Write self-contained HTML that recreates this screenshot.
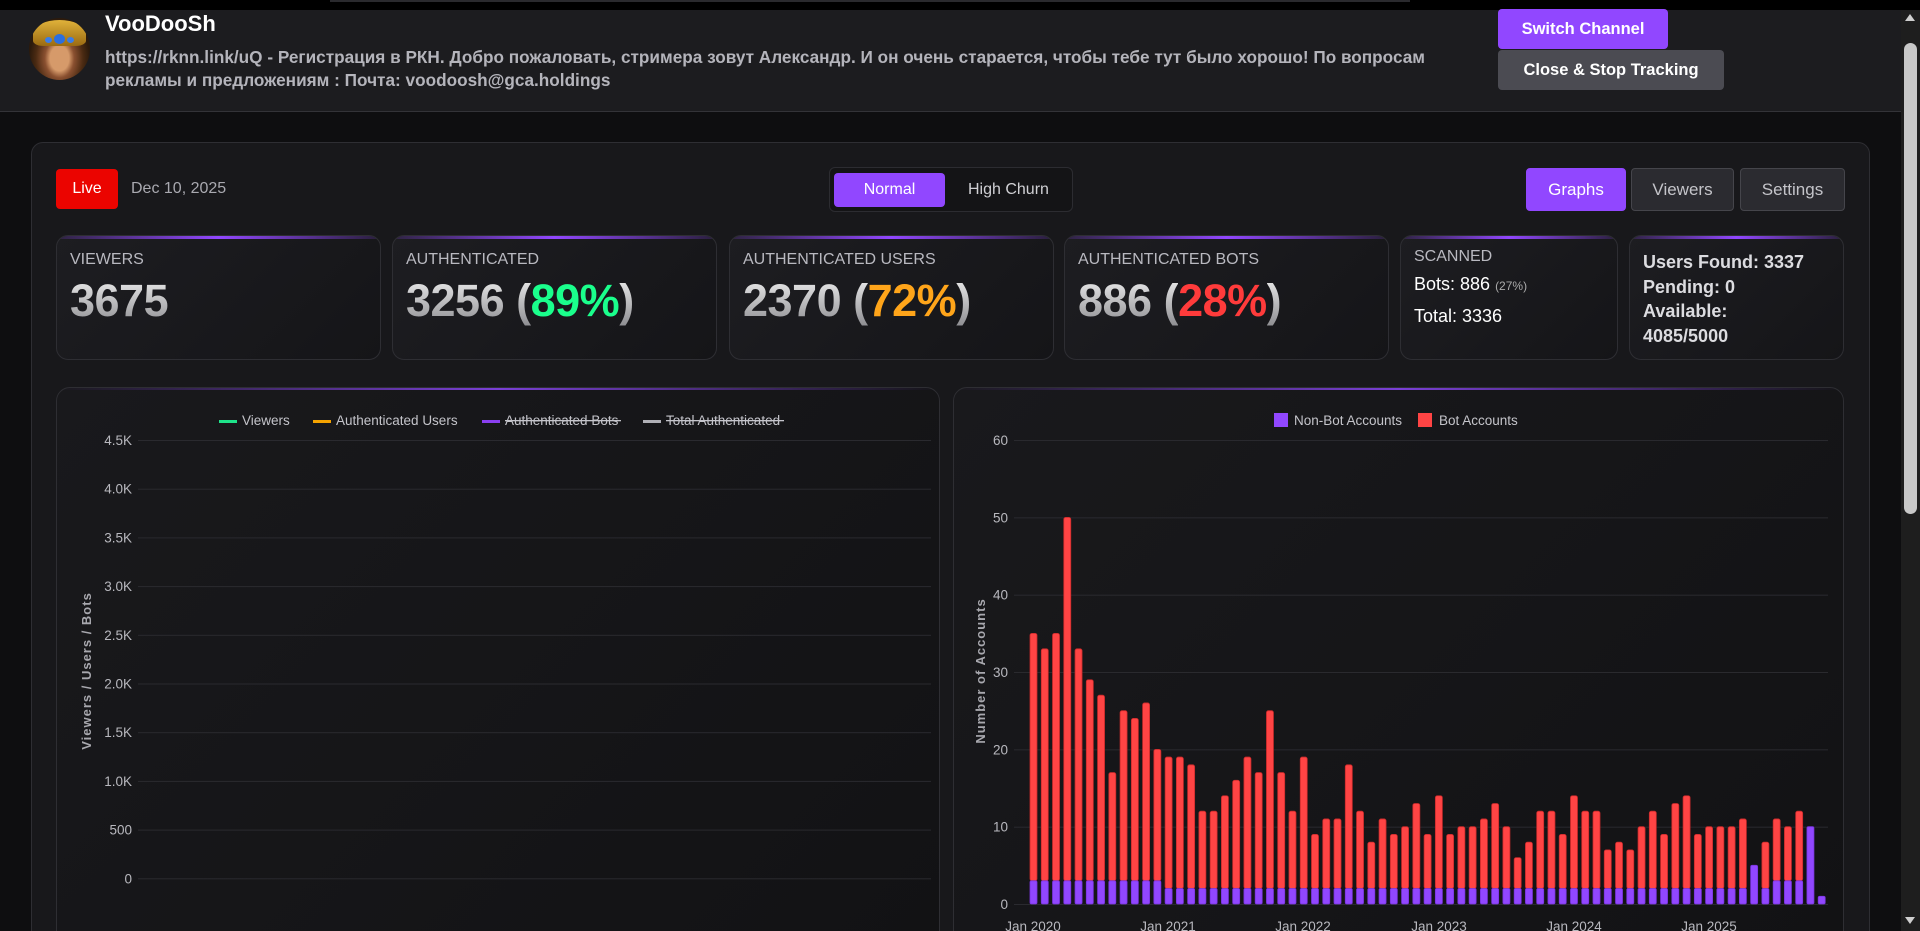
<!DOCTYPE html>
<html><head><meta charset="utf-8">
<style>
*{margin:0;padding:0;box-sizing:border-box}
html,body{width:1920px;height:931px;overflow:hidden;background:#0e0e10}
body{font-family:"Liberation Sans","Noto Sans CJK SC",sans-serif;color:#e8e8ea}
#wrap{position:relative;width:1920px;height:931px;overflow:hidden;background:#0e0e10}
.abs{position:absolute}
#top{left:0;top:0;width:1920px;height:10px;background:#000}
#topline{left:330px;top:0;width:1080px;height:2px;background:#2a2a2e}
#hdr{left:0;top:10px;width:1901px;height:102px;background:#1c1c1f;border-bottom:1px solid #333338}
#av{left:29px;top:18px;width:61px;height:62px;border-radius:50%;background:radial-gradient(ellipse at 50% 65%,#d69a6a 0 22%,#8a5030 34%,#4a2a12 55%,#2b1a0c 70%);overflow:hidden}
#av:before{content:"";position:absolute;left:4px;top:2px;width:53px;height:26px;border-radius:50% 50% 20% 20%;background:linear-gradient(#e0b23a,#9a6a12)}
#av:after{content:"";position:absolute;left:25px;top:16px;width:11px;height:10px;border-radius:50%;background:#2b6fe0;box-shadow:-11px 1px 0 -2px #3a7de8,11px 1px 0 -2px #3a7de8}
#name{left:105px;top:11px;font-size:22px;font-weight:bold;color:#fff}
#desc{left:105px;top:46px;width:1370px;font-size:17.2px;font-weight:bold;color:#b4b4bb;line-height:23px}
.btn{position:absolute;font-weight:bold;font-size:16.5px;color:#fff;border-radius:4px;display:flex;align-items:center;justify-content:center}
#sw{left:1498px;top:9px;width:170px;height:40px;background:#9147ff}
#cl{left:1498px;top:50px;width:226px;height:40px;background:#4b4b52}
#sb{left:1901px;top:10px;width:19px;height:921px;background:#1e1e1e}
#thumb{left:1904px;top:43px;width:13px;height:471px;border-radius:7px;background:#c8c8c8}
#main{left:31px;top:142px;width:1839px;height:850px;background:#18181b;border:1px solid #2e2e33;border-radius:12px}
#live{left:56px;top:169px;width:62px;height:40px;background:#eb0400;border-radius:4px;color:#fff;font-size:16px;display:flex;align-items:center;justify-content:center}
#date{left:131px;top:180px;font-size:16px;color:#a9a9b0}
#tog{left:829px;top:167px;width:244px;height:45px;border:1px solid #2c2c31;border-radius:6px;background:#141416}
#nrm{left:834px;top:173px;width:111px;height:34px;background:#9147ff;border-radius:4px;color:#fff;font-size:16px;display:flex;align-items:center;justify-content:center}
#hc{left:968px;top:181px;font-size:16px;color:#d0d0d4}
.tb{position:absolute;top:168px;height:43px;border-radius:4px;font-size:17px;display:flex;align-items:center;justify-content:center;color:#c4c4c9;background:#2b2b30;border:1px solid #45454b}
.card{position:absolute;top:235px;height:125px;border:1px solid #2e2e33;border-radius:12px;background:linear-gradient(135deg,#1d1d21,#151518);overflow:hidden}
.card:before{content:"";position:absolute;left:0;right:0;top:0;height:3px;background:linear-gradient(90deg,rgba(145,71,255,.15),#9147ff 50%,rgba(145,71,255,.15))}
.lbl{position:absolute;left:13px;top:15px;font-size:16px;color:#b9b9c0}
.val{position:absolute;left:13px;top:39px;font-size:45px;font-weight:bold;white-space:nowrap;letter-spacing:-0.5px}
.sv{background:linear-gradient(#f0f0f0,#8e8e92);-webkit-background-clip:text;color:transparent}
.chart{position:absolute;top:387px;height:600px;border:1px solid #2e2e33;border-radius:14px;background:linear-gradient(135deg,#19191c,#121214);overflow:hidden}
.chart:before{content:"";position:absolute;left:0;right:0;top:0;height:2px;background:linear-gradient(90deg,rgba(145,71,255,0),#7a3fd6 50%,rgba(145,71,255,0))}
svg text{font-family:"Liberation Sans",sans-serif}
</style></head><body><div id="wrap">
<div class="abs" id="top"></div><div class="abs" id="topline"></div>
<div class="abs" id="hdr"></div>
<div class="abs" id="av"></div>
<div class="abs" id="name">VooDooSh</div>
<div class="abs" id="desc">https://rknn.link/uQ - Регистрация в РКН. Добро пожаловать, стримера зовут Александр. И он очень старается, чтобы тебе тут было хорошо! По вопросам рекламы и предложениям : Почта: voodoosh@gca.holdings</div>
<div class="btn" id="sw">Switch Channel</div>
<div class="btn" id="cl">Close &amp; Stop Tracking</div>

<div class="abs" id="main"></div>
<div class="abs" id="live">Live</div>
<div class="abs" id="date">Dec 10, 2025</div>
<div class="abs" id="tog"></div>
<div class="abs" id="nrm">Normal</div>
<div class="abs" id="hc">High Churn</div>
<div class="tb" style="left:1526px;width:100px;background:#9147ff;border-color:#9147ff;color:#fff">Graphs</div>
<div class="tb" style="left:1631px;width:103px">Viewers</div>
<div class="tb" style="left:1740px;width:105px">Settings</div>

<div class="card" style="left:56px;width:325px"><div class="lbl">VIEWERS</div><div class="val"><span class="sv">3675</span></div></div>
<div class="card" style="left:392px;width:325px"><div class="lbl">AUTHENTICATED</div><div class="val"><span class="sv">3256 (</span><span style="color:#1aff8c">89%</span><span class="sv">)</span></div></div>
<div class="card" style="left:729px;width:325px"><div class="lbl">AUTHENTICATED USERS</div><div class="val"><span class="sv">2370 (</span><span style="color:#ffa51a">72%</span><span class="sv">)</span></div></div>
<div class="card" style="left:1064px;width:325px"><div class="lbl">AUTHENTICATED BOTS</div><div class="val"><span class="sv">886 (</span><span style="color:#ff3b3b">28%</span><span class="sv">)</span></div></div>
<div class="card" style="left:1400px;width:218px"><div class="lbl" style="top:12px">SCANNED</div>
<div class="abs" style="left:13px;top:38px;font-size:18px;color:#fff">Bots: 886 <span style="font-size:12px;color:#aaa">(27%)</span></div>
<div class="abs" style="left:13px;top:70px;font-size:18px;color:#fff">Total: 3336</div></div>
<div class="card" style="left:1629px;width:215px"><div class="abs" style="left:13px;top:14px;font-size:18px;font-weight:bold;line-height:24.5px;color:#dcdce0">Users Found: 3337<br>Pending: 0<br>Available:<br>4085/5000</div></div>

<div class="chart" style="left:56px;width:884px"></div>
<div class="chart" style="left:953px;width:891px"></div>

<svg class="abs" style="left:0;top:0" width="1920" height="931" id="ov">
<g font-size="13.5" fill="#c4c4ca">
<rect x="219" y="420" width="18" height="3" fill="#1ee38a"/><text x="242" y="425">Viewers</text>
<rect x="313" y="420" width="18" height="3" fill="#f5a300"/><text x="336" y="425">Authenticated Users</text>
<rect x="482" y="420" width="18" height="3" fill="#8a3ff0"/><text x="505" y="425">Authenticated Bots</text><rect x="505" y="420" width="116" height="1.3" fill="#c4c4ca"/>
<rect x="643" y="420" width="18" height="3" fill="#b0b0b6"/><text x="666" y="425">Total Authenticated</text><rect x="666" y="420" width="118" height="1.3" fill="#c4c4ca"/>
</g>
<g id="lg" font-size="13.5" fill="#b8b8be" text-anchor="end"></g>
<text transform="translate(91,671) rotate(-90)" text-anchor="middle" font-size="13" font-weight="bold" fill="#a8a8ae" letter-spacing="1">Viewers / Users / Bots</text>
<g font-size="13.5" fill="#c4c4ca">
<rect x="1274" y="413" width="14" height="14" fill="#9147ff"/><text x="1294" y="425">Non-Bot Accounts</text>
<rect x="1418" y="413" width="14" height="14" fill="#ff4444"/><text x="1439" y="425">Bot Accounts</text>
</g>
<g id="rg" font-size="13.5" fill="#b8b8be" text-anchor="end"></g>
<text transform="translate(985,671) rotate(-90)" text-anchor="middle" font-size="13" font-weight="bold" fill="#a8a8ae" letter-spacing="1">Number of Accounts</text>
<g id="bars"></g>
<g font-size="13.5" fill="#b8b8be" text-anchor="middle">
<text x="1033" y="931">Jan 2020</text><text x="1168" y="931">Jan 2021</text><text x="1303" y="931">Jan 2022</text><text x="1439" y="931">Jan 2023</text><text x="1574" y="931">Jan 2024</text><text x="1709" y="931">Jan 2025</text>
</g>
</svg>

<div class="abs" id="sb"></div>
<div class="abs" id="thumb"></div>
<div class="abs" style="left:1905px;top:14px;width:0;height:0;border-left:5px solid transparent;border-right:5px solid transparent;border-bottom:7px solid #cfcfcf"></div>
<div class="abs" style="left:1905px;top:917px;width:0;height:0;border-left:5px solid transparent;border-right:5px solid transparent;border-top:7px solid #cfcfcf"></div>
</div>
<script>
var ns="http://www.w3.org/2000/svg";
function el(p,t,a,txt){var e=document.createElementNS(ns,t);for(var k in a)e.setAttribute(k,a[k]);if(txt!=null)e.textContent=txt;p.appendChild(e);return e;}
var lg=document.getElementById('lg');
var ll=["4.5K","4.0K","3.5K","3.0K","2.5K","2.0K","1.5K","1.0K","500","0"];
for(var i=0;i<10;i++){var y=440+i*48.7;el(lg,'rect',{x:138,y:y,width:793,height:1,fill:'#2a2a2f'});el(lg,'text',{x:132,y:y+5},ll[i]);}
var rg=document.getElementById('rg');
for(var i=0;i<7;i++){var v=60-i*10,y=904-v*7.733;el(rg,'rect',{x:1014,y:y,width:814,height:1,fill:'#2a2a2f'});el(rg,'text',{x:1008,y:y+5},String(v));}
var tot=[35,33,35,50,33,29,27,17,25,24,26,20,19,19,18,12,12,14,16,19,17,25,17,12,19,9,11,11,18,12,8,11,9,10,13,9,14,9,10,10,11,13,10,6,8,12,12,9,14,12,12,7,8,7,10,12,9,13,14,9,10,10,10,11,5,8,11,10,12,10,1];
var bg=document.getElementById('bars');
for(var i=0;i<tot.length;i++){
 var nb=i<12?3:2;
 if(i==64)nb=5; if(i>=66&&i<=68)nb=3; if(i==69)nb=10; if(i==70)nb=1;
 var cx=1033.5+i*11.26,w=7,x=cx-w/2,yb=904,yn=904-nb*7.733,yt=904-tot[i]*7.733;
 if(tot[i]>nb){el(bg,'rect',{x:x,y:yt,width:w,height:yn-yt,rx:2,fill:'#ff4444',stroke:'#c92a2a','stroke-width':0.8});}
 el(bg,'rect',{x:x,y:yn,width:w,height:yb-yn,rx:1.5,fill:'#9147ff',stroke:'#7a34e0','stroke-width':0.8});
}
</script>
</body></html>
